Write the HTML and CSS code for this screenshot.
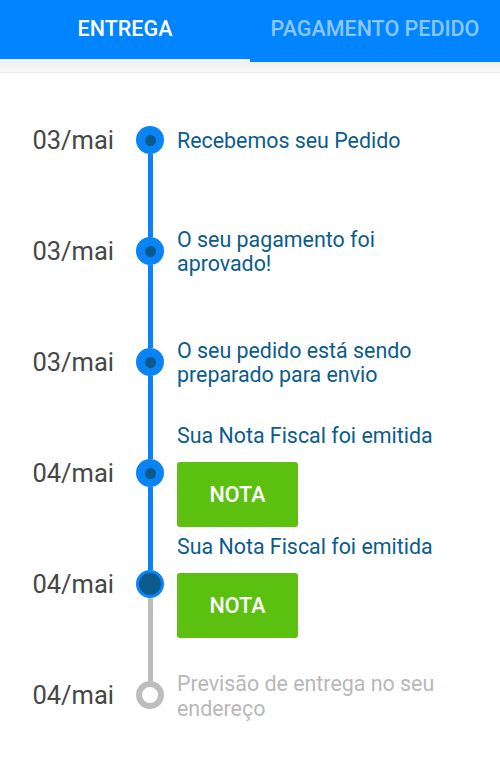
FILE: index.html
```html
<!DOCTYPE html>
<html lang="pt">
<head>
<meta charset="utf-8">
<link rel="stylesheet" href="styles.css">
</head>
<body>
<div class="tabs">
  <div class="tab active">ENTREGA</div>
  <div class="tab">PAGAMENTO PEDIDO</div>
</div>
<div class="band"></div>
<div class="timeline">
  <div class="row">
    <div class="date">03/mai</div>
    <div class="track"><span class="seg none"></span><span class="dot"></span><span class="seg blue"></span></div>
    <div class="content"><p class="msg">Recebemos seu Pedido</p></div>
  </div>
  <div class="row">
    <div class="date">03/mai</div>
    <div class="track"><span class="seg blue"></span><span class="dot"></span><span class="seg blue"></span></div>
    <div class="content"><p class="msg">O seu pagamento foi<br>aprovado!</p></div>
  </div>
  <div class="row">
    <div class="date">03/mai</div>
    <div class="track"><span class="seg blue"></span><span class="dot"></span><span class="seg blue"></span></div>
    <div class="content"><p class="msg">O seu pedido está sendo<br>preparado para envio</p></div>
  </div>
  <div class="row">
    <div class="date">04/mai</div>
    <div class="track"><span class="seg blue"></span><span class="dot"></span><span class="seg blue"></span></div>
    <div class="content with-btn"><p class="msg">Sua Nota Fiscal foi emitida</p><button class="nota">NOTA</button></div>
  </div>
  <div class="row">
    <div class="date">04/mai</div>
    <div class="track"><span class="seg blue"></span><span class="dot current"></span><span class="seg gray"></span></div>
    <div class="content with-btn"><p class="msg">Sua Nota Fiscal foi emitida</p><button class="nota">NOTA</button></div>
  </div>
  <div class="row">
    <div class="date">04/mai</div>
    <div class="track"><span class="seg gray"></span><span class="dot pending"></span><span class="seg none"></span></div>
    <div class="content"><p class="msg muted">Previsão de entrega no seu<br>endereço</p></div>
  </div>
</div>
</body>
</html>
```

FILE: styles.css
```css
* { box-sizing: border-box; }
html, body {
  margin: 0;
  padding: 0;
  background: #ffffff;
  font-family: Roboto, "Noto Sans", "Liberation Sans", sans-serif;
}
.tabs {
  display: flex;
  height: 62px;
  background: #0084ff;
}
.tab {
  flex: 1;
  display: flex;
  align-items: center;
  justify-content: center;
  padding-bottom: 3px;
  font-size: 21.5px;
  font-weight: 500;
  color: #8cc6ff;
  border-bottom: 3px solid transparent;
}
.tab.active {
  color: #ffffff;
  border-bottom-color: #eef3f7;
}
.band {
  height: 11px;
  background: linear-gradient(#eeeeee, #f9f9f9);
  border-bottom: 1px solid #ebebeb;
}
.timeline {
  padding-top: 11.5px;
}
.row {
  display: flex;
  height: 111px;
  align-items: center;
}
.date {
  width: 114px;
  margin-right: 22px;
  text-align: right;
  font-size: 25.5px;
  color: #474747;
}
.track {
  width: 28px;
  align-self: stretch;
  display: flex;
  flex-direction: column;
  align-items: center;
  margin-right: 13px;
}
.seg {
  flex: 1;
  width: 5px;
}
.seg.blue { background: #0a84f5; }
.seg.gray { background: #bdbdbd; }
.seg.none { background: transparent; }
.dot {
  flex: none;
  width: 28px;
  height: 28px;
  border-radius: 50%;
  background: #0a84f5;
  display: flex;
  align-items: center;
  justify-content: center;
}
.dot::after {
  content: "";
  width: 11px;
  height: 11px;
  border-radius: 50%;
  background: #0b5a8c;
}
.dot.current {
  background: #0b5a8c;
  border: 3px solid #0a84f5;
}
.dot.current::after { display: none; }
.dot.pending {
  background: #ffffff;
  border: 6px solid #bdbdbd;
}
.dot.pending::after { display: none; }
.content {
  flex: 1;
  display: flex;
  flex-direction: column;
  align-items: flex-start;
}
.content.with-btn {
  padding-top: 4px;
}
.msg {
  margin: 0;
  padding-top: 1px;
  font-size: 21.4px;
  line-height: 24px;
  color: #0b5c8c;
}
.msg.muted {
  color: #b8b8b8;
  line-height: 25px;
}
.nota {
  margin-top: 14px;
  width: 121px;
  height: 65px;
  border: none;
  border-radius: 3px;
  background: #5bc00f;
  color: #ffffff;
  font-family: Roboto, "Noto Sans", "Liberation Sans", sans-serif;
  font-size: 21.5px;
  font-weight: 500;
  padding: 0;
}
```
